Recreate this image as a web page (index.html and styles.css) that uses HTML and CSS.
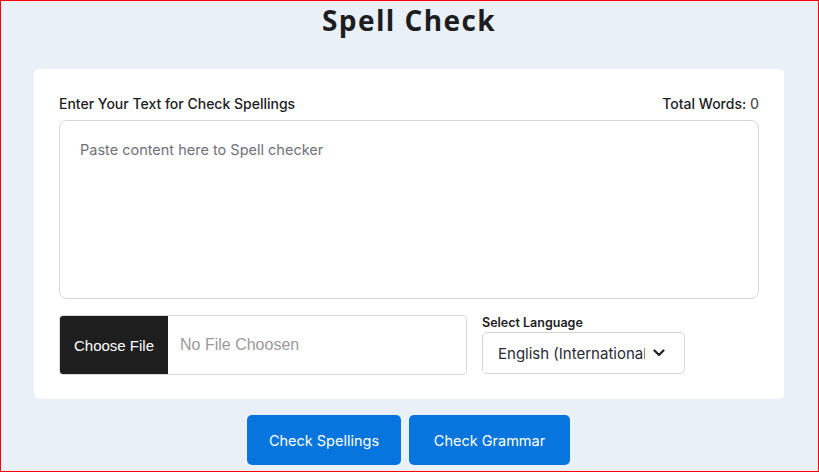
FILE: index.html
```html
<!DOCTYPE html>
<html lang="en">
<head>
<meta charset="utf-8">
<title>Spell Check</title>
<link rel="stylesheet" href="styles.css">
</head>
<body>
<div class="page">
  <h1 class="title">Spell Check</h1>
  <section class="card">
    <div class="label-row">
      <span class="label">Enter Your Text for Check Spellings</span>
      <span class="label">Total Words: <span class="count">0</span></span>
    </div>
    <textarea class="text-input" placeholder="Paste content here to Spell checker"></textarea>
    <div class="controls">
      <div class="file-group">
        <span class="file-btn">Choose File</span>
        <span class="file-name">No File Choosen</span>
      </div>
      <div class="lang-group">
        <span class="lang-label">Select Language</span>
        <div class="select">
          <span class="select-text">English (International)</span>
          <svg class="chevron" width="12" height="8" viewBox="0 0 12 8"><path d="M1.5 1.5 L6 6 L10.5 1.5" fill="none" stroke="#222" stroke-width="2.2" stroke-linecap="round" stroke-linejoin="round"/></svg>
        </div>
      </div>
    </div>
  </section>
  <div class="actions">
    <button class="btn btn-spell">Check Spellings</button>
    <button class="btn btn-grammar">Check Grammar</button>
  </div>
</div>
</body>
</html>
```
FILE: styles.css
```css
* { box-sizing: border-box; }
html, body { margin: 0; padding: 0; }
body { background: #ffffff; font-family: "Inter", "Noto Sans", sans-serif; }
.page {
  width: 819px;
  height: 472px;
  border: 1px solid #ff0000;
  background: #e9f0f8;
  padding-right: 1px;
  display: flex;
  flex-direction: column;
  align-items: center;
}
.title {
  margin: 3px 0 0;
  font-family: "Open Sans", sans-serif;
  font-weight: 700;
  font-size: 28px;
  line-height: 32px;
  color: #1d1d1f;
  letter-spacing: 1.4px;
}
.card {
  margin-top: 33px;
  width: 750px;
  background: #ffffff;
  border-radius: 5px;
  padding: 24px 25px 24px 25px;
  display: flex;
  flex-direction: column;
}
.label-row {
  display: flex;
  justify-content: space-between;
  align-items: center;
  height: 20px;
  margin-bottom: 7px;
}
.label {
  font-size: 14px;
  font-weight: 500;
  color: #1d1d1f;
}
.count { color: #555; }
.text-input {
  width: 700px;
  height: 179px;
  border: 1px solid #d6d6d6;
  border-radius: 8px;
  padding: 20px 20px;
  resize: none;
  font-family: "Inter", sans-serif;
  font-size: 14.5px;
  outline: none;
}
.text-input::placeholder { color: #6f7179; }
.controls {
  margin-top: 16px;
  display: flex;
  align-items: flex-end;
  gap: 15px;
}
.file-group {
  width: 408px;
  height: 60px;
  display: flex;
  border: 1px solid #d9d9d9;
  border-radius: 4px;
  overflow: hidden;
}
.file-btn {
  width: 108px;
  background: #1e1e1e;
  color: #ffffff;
  font-family: "Liberation Sans", Arial, sans-serif;
  font-size: 15px;
  display: flex;
  align-items: center;
  justify-content: center;
}
.file-name {
  padding-left: 12px;
  display: flex;
  align-items: center;
  font-family: "Liberation Sans", Arial, sans-serif;
  font-size: 16px;
  color: #9a9a9a;
}
.lang-group {
  display: flex;
  flex-direction: column;
  margin-bottom: 1px;
}
.lang-label {
  font-size: 12.5px;
  font-weight: 600;
  color: #1d1d1f;
  line-height: 15px;
  margin-bottom: 2px;
}
.select {
  width: 203px;
  height: 42px;
  border: 1px solid #d6d6d6;
  border-radius: 5px;
  display: flex;
  align-items: center;
  padding: 0 19px 0 15px;
  gap: 8px;
}
.select-text {
  width: 148px;
  overflow: hidden;
  white-space: nowrap;
  font-size: 15px;
  color: #2a2a35;
}
.chevron { flex: none; }
.actions {
  margin-top: 16px;
  margin-right: 1px;
  display: flex;
  gap: 8px;
}
.btn {
  height: 50px;
  border: none;
  border-radius: 5px;
  background: #0675dd;
  color: #ffffff;
  font-family: "Inter", sans-serif;
  font-size: 14.5px;
  font-weight: 400;
  cursor: pointer;
}
.btn-spell { width: 154px; }
.btn-grammar { width: 161px; }
```
